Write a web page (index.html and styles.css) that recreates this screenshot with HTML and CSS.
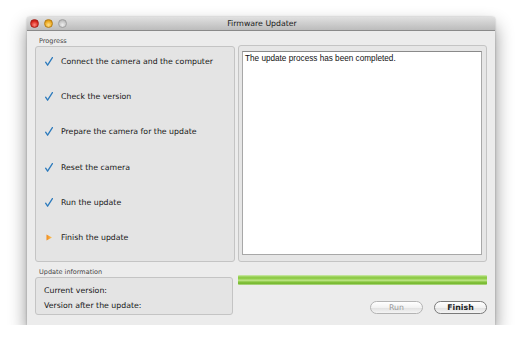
FILE: index.html
```html
<!DOCTYPE html>
<html>
<head>
<meta charset="utf-8">
<title>Firmware Updater</title>
<link rel="stylesheet" href="styles.css">
</head>
<body>
<div class="window">
  <div class="titlebar">
    <div class="lights">
      <span class="light red"></span>
      <span class="light orange"></span>
      <span class="light gray"></span>
    </div>
    <div class="title">Firmware Updater</div>
  </div>
  <div class="content">
    <div class="top">
      <div class="leftcol">
        <div class="label">Progress</div>
        <div class="steps">
          <div class="step"><svg class="ico" viewBox="0 0 8 9"><path d="M0.6 5.2 L2.6 8.2 L7.4 0.6" fill="none" stroke="#2d7bbd" stroke-width="1.3" stroke-linecap="round" stroke-linejoin="round"/></svg><span>Connect the camera and the computer</span></div>
          <div class="step"><svg class="ico" viewBox="0 0 8 9"><path d="M0.6 5.2 L2.6 8.2 L7.4 0.6" fill="none" stroke="#2d7bbd" stroke-width="1.3" stroke-linecap="round" stroke-linejoin="round"/></svg><span>Check the version</span></div>
          <div class="step"><svg class="ico" viewBox="0 0 8 9"><path d="M0.6 5.2 L2.6 8.2 L7.4 0.6" fill="none" stroke="#2d7bbd" stroke-width="1.3" stroke-linecap="round" stroke-linejoin="round"/></svg><span>Prepare the camera for the update</span></div>
          <div class="step"><svg class="ico" viewBox="0 0 8 9"><path d="M0.6 5.2 L2.6 8.2 L7.4 0.6" fill="none" stroke="#2d7bbd" stroke-width="1.3" stroke-linecap="round" stroke-linejoin="round"/></svg><span>Reset the camera</span></div>
          <div class="step"><svg class="ico" viewBox="0 0 8 9"><path d="M0.6 5.2 L2.6 8.2 L7.4 0.6" fill="none" stroke="#2d7bbd" stroke-width="1.3" stroke-linecap="round" stroke-linejoin="round"/></svg><span>Run the update</span></div>
          <div class="step"><svg class="ico" viewBox="0 0 8 9"><defs><linearGradient id="og" x1="0" y1="0" x2="1" y2="0"><stop offset="0" stop-color="#f08a1c"/><stop offset="1" stop-color="#fbc45a"/></linearGradient></defs><path d="M1.5 1.5 L7 4.5 L1.5 7.5 Z" fill="url(#og)"/></svg><span>Finish the update</span></div>
        </div>
      </div>
      <div class="rightcol">
        <div class="panel">
          <div class="textbox">The update process has been completed.</div>
        </div>
      </div>
    </div>
    <div class="bottom">
      <div class="leftcol2">
        <div class="label">Update information</div>
        <div class="info">
          <div>Current version:</div>
          <div>Version after the update:</div>
        </div>
      </div>
      <div class="rightcol2">
        <div class="bar"></div>
        <div class="buttons">
          <button class="btn disabled">Run</button>
          <button class="btn primary">Finish</button>
        </div>
      </div>
    </div>
  </div>
</div>
</body>
</html>
```

FILE: styles.css
```css
html, body {
  margin: 0;
  padding: 0;
  background: #ffffff;
}
body {
  font-family: "DejaVu Sans", sans-serif;
  color: #222;
  padding: 17px 0 0 27px;
}
.window {
  width: 468px;
  height: 308px;
  background: #ececec;
  box-shadow: 0 9px 18px rgba(0,0,0,0.45), 0 0 2px rgba(0,0,0,0.3);
  border-radius: 3px 3px 0 0;
  display: flex;
  flex-direction: column;
}
.titlebar {
  height: 13px;
  border-bottom: 1px solid #8a8a8a;
  background: linear-gradient(#e0e0e0, #bcbcbc);
  border-radius: 3px 3px 0 0;
  display: flex;
  align-items: center;
}
.lights {
  display: flex;
  gap: 5px;
  padding-left: 3px;
}
.light {
  width: 9px;
  height: 9px;
  border-radius: 50%;
  box-sizing: border-box;
}
.red {
  background: radial-gradient(circle at 50% 70%, #ff8c80, #d8261c 60%, #a31a12);
  border: 1px solid #a8231b;
}
.orange {
  background: radial-gradient(circle at 50% 70%, #ffe08a, #eda81c 60%, #b87a10);
  border: 1px solid #b47d18;
}
.gray {
  background: radial-gradient(circle at 50% 70%, #eeeeee, #c6c6c6 60%, #a8a8a8);
  border: 1px solid #a0a0a0;
}
.title {
  flex: 1;
  text-align: center;
  font-size: 7.8px;
  color: #1a1a1a;
  margin-left: -38px;
}
.content {
  flex: 1;
  padding: 6px 8px 10px 8px;
  display: flex;
  flex-direction: column;
}
.top {
  display: flex;
  gap: 3px;
  height: 225px;
}
.leftcol {
  width: 200px;
  display: flex;
  flex-direction: column;
}
.label {
  font-size: 6.5px;
  color: #444;
  height: 9px;
  line-height: 9px;
  padding-left: 4px;
}
.steps {
  flex: 1;
  box-sizing: border-box;
  border: 1px solid #c4c4c4;
  border-radius: 3px;
  background: #e4e4e4;
  padding: 7px 0 0 9px;
  display: flex;
  flex-direction: column;
  gap: 21.4px;
}
.step {
  height: 14px;
  display: flex;
  align-items: center;
  gap: 8px;
  font-size: 7.8px;
  color: #161616;
}
.ico {
  width: 8px;
  height: 9px;
  flex: none;
}
.rightcol {
  flex: 1;
  display: flex;
  flex-direction: column;
  padding-top: 8px;
}
.panel {
  flex: 1;
  box-sizing: border-box;
  border: 1px solid #c4c4c4;
  border-radius: 3px;
  background: #e6e6e6;
  padding: 5px 4px 6px 3px;
  display: flex;
}
.textbox {
  flex: 1;
  background: #ffffff;
  border: 1px solid #a8a8a8;
  border-top-color: #8a8a8a;
  font-family: "Liberation Sans", Arial, sans-serif;
  font-size: 8.2px;
  color: #111;
  padding: 2px 2px;
}
.bottom {
  display: flex;
  gap: 5px;
  flex: 1;
  padding-top: 6px;
}
.leftcol2 {
  width: 198px;
  display: flex;
  flex-direction: column;
}
.info {
  flex: 1;
  box-sizing: border-box;
  border: 1px solid #c4c4c4;
  border-radius: 3px;
  background: #e4e4e4;
  padding: 8px 0 0 8px;
  display: flex;
  flex-direction: column;
  gap: 6px;
  font-size: 7.8px;
  color: #161616;
}
.rightcol2 {
  flex: 1;
  display: flex;
  flex-direction: column;
  padding-top: 7px;
}
.bar {
  height: 10px;
  border-radius: 1px;
  background: linear-gradient(#d4ecb8 0%, #a6d86c 12%, #86c63c 30%, #a8da6a 45%, #b8e27e 55%, #82c23a 72%, #78b834 88%, #c4e4a2 100%);
}
.buttons {
  display: flex;
  justify-content: flex-end;
  gap: 11px;
  margin-top: 16px;
}
.btn {
  width: 53px;
  height: 13px;
  box-sizing: border-box;
  border-radius: 7px;
  border: 1px solid #7a7a7a;
  background: linear-gradient(#ffffff, #f2f2f2 50%, #e2e2e2 55%, #f4f4f4);
  font-family: "DejaVu Sans", sans-serif;
  font-size: 7.8px;
  padding: 0;
  line-height: 11px;
  color: #222;
}
.btn.disabled {
  color: #9a9a9a;
  border-color: #b4b4b4;
}
.btn.primary {
  font-weight: bold;
  color: #222;
}
```
